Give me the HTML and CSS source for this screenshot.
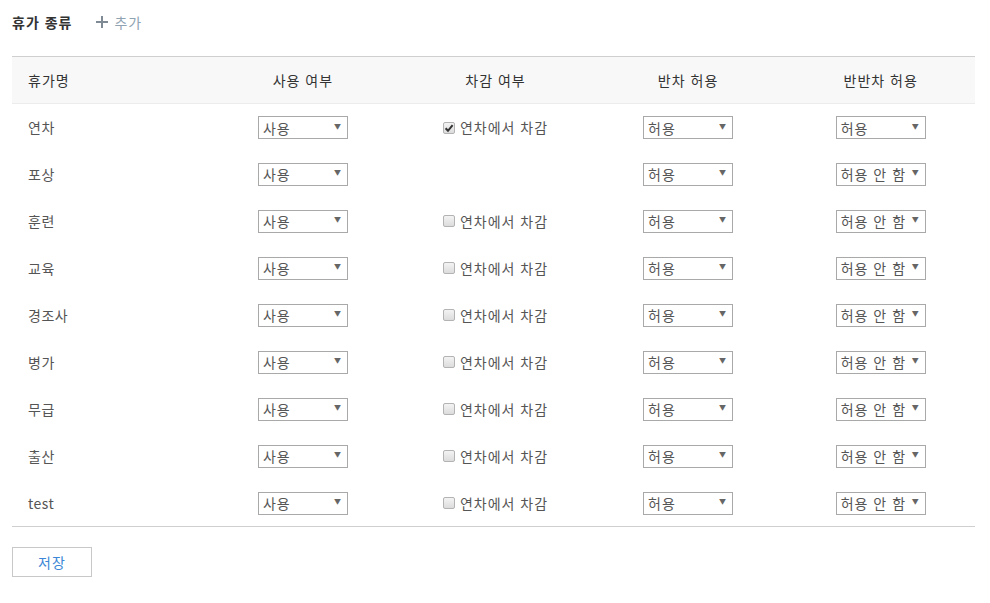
FILE: index.html
```html
<!DOCTYPE html>
<html lang="ko">
<head>
<meta charset="utf-8">
<link rel="stylesheet" href="styles.css">
</head>
<body>
<div class="page">
  <div class="title-bar">
    <h1 class="title">휴가 종류</h1>
    <button class="add-btn"><svg class="plus" viewBox="0 0 12 12" width="12" height="12"><path d="M6 0 V12 M0 6 H12" stroke="#7f8a95" stroke-width="2" fill="none"/></svg>추가</button>
  </div>
  <table class="leave-table">
    <thead>
      <tr>
        <th class="name-col">휴가명</th>
        <th>사용 여부</th>
        <th>차감 여부</th>
        <th>반차 허용</th>
        <th>반반차 허용</th>
      </tr>
    </thead>
    <tbody>
      <tr>
        <td class="name-col">연차</td>
        <td><span class="sel"><span class="sel-text">사용</span><span class="arrow">▼</span></span></td>
        <td><label class="chk"><span class="box checked"><svg viewBox="0 0 12 12" width="12" height="12"><path d="M2.6 6.2 L5 8.8 L9.6 3.2" fill="none" stroke="#333" stroke-width="2"/></svg></span>연차에서 차감</label></td>
        <td><span class="sel"><span class="sel-text">허용</span><span class="arrow">▼</span></span></td>
        <td><span class="sel"><span class="sel-text">허용</span><span class="arrow">▼</span></span></td>
      </tr>
      <tr>
        <td class="name-col">포상</td>
        <td><span class="sel"><span class="sel-text">사용</span><span class="arrow">▼</span></span></td>
        <td></td>
        <td><span class="sel"><span class="sel-text">허용</span><span class="arrow">▼</span></span></td>
        <td><span class="sel"><span class="sel-text">허용 안 함</span><span class="arrow">▼</span></span></td>
      </tr>
      <tr>
        <td class="name-col">훈련</td>
        <td><span class="sel"><span class="sel-text">사용</span><span class="arrow">▼</span></span></td>
        <td><label class="chk"><span class="box"></span>연차에서 차감</label></td>
        <td><span class="sel"><span class="sel-text">허용</span><span class="arrow">▼</span></span></td>
        <td><span class="sel"><span class="sel-text">허용 안 함</span><span class="arrow">▼</span></span></td>
      </tr>
      <tr>
        <td class="name-col">교육</td>
        <td><span class="sel"><span class="sel-text">사용</span><span class="arrow">▼</span></span></td>
        <td><label class="chk"><span class="box"></span>연차에서 차감</label></td>
        <td><span class="sel"><span class="sel-text">허용</span><span class="arrow">▼</span></span></td>
        <td><span class="sel"><span class="sel-text">허용 안 함</span><span class="arrow">▼</span></span></td>
      </tr>
      <tr>
        <td class="name-col">경조사</td>
        <td><span class="sel"><span class="sel-text">사용</span><span class="arrow">▼</span></span></td>
        <td><label class="chk"><span class="box"></span>연차에서 차감</label></td>
        <td><span class="sel"><span class="sel-text">허용</span><span class="arrow">▼</span></span></td>
        <td><span class="sel"><span class="sel-text">허용 안 함</span><span class="arrow">▼</span></span></td>
      </tr>
      <tr>
        <td class="name-col">병가</td>
        <td><span class="sel"><span class="sel-text">사용</span><span class="arrow">▼</span></span></td>
        <td><label class="chk"><span class="box"></span>연차에서 차감</label></td>
        <td><span class="sel"><span class="sel-text">허용</span><span class="arrow">▼</span></span></td>
        <td><span class="sel"><span class="sel-text">허용 안 함</span><span class="arrow">▼</span></span></td>
      </tr>
      <tr>
        <td class="name-col">무급</td>
        <td><span class="sel"><span class="sel-text">사용</span><span class="arrow">▼</span></span></td>
        <td><label class="chk"><span class="box"></span>연차에서 차감</label></td>
        <td><span class="sel"><span class="sel-text">허용</span><span class="arrow">▼</span></span></td>
        <td><span class="sel"><span class="sel-text">허용 안 함</span><span class="arrow">▼</span></span></td>
      </tr>
      <tr>
        <td class="name-col">출산</td>
        <td><span class="sel"><span class="sel-text">사용</span><span class="arrow">▼</span></span></td>
        <td><label class="chk"><span class="box"></span>연차에서 차감</label></td>
        <td><span class="sel"><span class="sel-text">허용</span><span class="arrow">▼</span></span></td>
        <td><span class="sel"><span class="sel-text">허용 안 함</span><span class="arrow">▼</span></span></td>
      </tr>
      <tr>
        <td class="name-col">test</td>
        <td><span class="sel"><span class="sel-text">사용</span><span class="arrow">▼</span></span></td>
        <td><label class="chk"><span class="box"></span>연차에서 차감</label></td>
        <td><span class="sel"><span class="sel-text">허용</span><span class="arrow">▼</span></span></td>
        <td><span class="sel"><span class="sel-text">허용 안 함</span><span class="arrow">▼</span></span></td>
      </tr>
    </tbody>
  </table>
  <div class="actions">
    <button class="save-btn">저장</button>
  </div>
</div>
</body>
</html>
```

FILE: styles.css
```css
* { box-sizing: border-box; }
html, body { margin: 0; padding: 0; background: #fff; }
body {
  font-family: "Noto Sans CJK KR", "Noto Sans", sans-serif;
  font-size: 14px;
  color: #555;
  letter-spacing: 1px;
}
.page { padding: 0 15px 0 12px; }
.title-bar {
  display: flex;
  align-items: center;
  height: 44px;
  gap: 24px;
}
.title {
  margin: 0;
  font-size: 14px;
  font-weight: 700;
  color: #333;
  letter-spacing: 1px;
}
.add-btn {
  border: 0;
  background: none;
  padding: 0;
  font: inherit;
  font-size: 14px;
  letter-spacing: 1px;
  color: #8fa3b3;
  display: flex;
  align-items: center;
  gap: 6px;
  cursor: pointer;
}
.add-btn .plus { display: block; }
.leave-table {
  width: 100%;
  margin-top: 12px;
  border-collapse: collapse;
  table-layout: fixed;
  border-top: 1px solid #cfcfcf;
  border-bottom: 1px solid #cfcfcf;
}
.leave-table th {
  height: 47px;
  background: #f8f8f8;
  border-bottom: 1px solid #ececec;
  font-weight: 400;
  color: #333;
  text-align: center;
  padding: 0 0 0 4px;
  font-size: 14px;
}
.leave-table td {
  height: 47px;
  text-align: center;
  padding: 0 0 0 4px;
  vertical-align: middle;
}
.leave-table .name-col {
  text-align: left;
  padding-left: 16px;
}
.leave-table td.name-col { color: #555; letter-spacing: 0.5px; }
.sel {
  display: inline-flex;
  align-items: center;
  justify-content: space-between;
  width: 90px;
  height: 23px;
  border: 1px solid #a9a9a9;
  padding: 0 6px 0 4px;
  background: #fff;
  color: #555;
  font-size: 14px;
  text-align: left;
  vertical-align: middle;
}
.sel-text { white-space: nowrap; }
.arrow {
  font-size: 7px;
  color: #666;
  line-height: 1;
  letter-spacing: 0;
  margin-top: -3px;
}
.chk {
  display: inline-flex;
  align-items: center;
  gap: 5px;
  color: #555;
  font-size: 14px;
}
.box {
  width: 12px;
  height: 12px;
  border: 1px solid #b3b3b3;
  border-radius: 2px;
  background: linear-gradient(#f3f3f3, #dcdcdc);
  display: inline-flex;
  align-items: center;
  justify-content: center;
  margin-top: 1px;
}
.box svg { display: block; margin: -1px; }
.actions { padding-top: 20px; }
.save-btn {
  width: 80px;
  height: 30px;
  border: 1px solid #c8c8c8;
  background: #fff;
  color: #3b86d6;
  font: inherit;
  font-size: 14px;
  letter-spacing: 1px;
  cursor: pointer;
}
```
